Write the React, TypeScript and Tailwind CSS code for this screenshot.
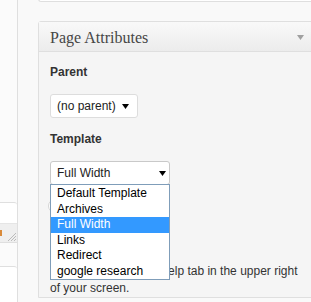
const TEMPLATES = ['Default Template', 'Archives', 'Full Width', 'Links', 'Redirect', 'google research'];

function Caret({ className }: { className?: string }) {
  return (
    <svg width="7" height="5" viewBox="0 0 7 5" className={className}>
      <path d="M0 0h7L3.5 5z" fill="currentColor" />
    </svg>
  );
}

export default function App() {
  return (
    <div className="flex h-[302px] w-[311px] overflow-hidden bg-[#f9f9f9] font-['Liberation_Sans',Arial,sans-serif] text-[12px] text-[#333]">
      {/* left column, cut off */}
      <aside className="flex w-[18px] shrink-0 flex-col border-r border-[#dfdfdf] bg-[#fbfbfb]">
        <div className="h-[228px]" />
        <div className="h-[41px] rounded-tr-[3px] border-y border-[#dfdfdf] bg-white">
          <div className="h-[20px]" />
          <div className="relative flex h-[19px] items-center border-t border-[#e5e5e5] bg-[#efefef]">
            <span className="h-[6px] w-[2px] bg-[#d98a3a]" />
            <svg width="9" height="9" viewBox="0 0 9 9" className="absolute right-[1px] bottom-[1px]">
              <path d="M9 1L1 9M9 4L4 9M9 7L7 9" stroke="#bbb" strokeWidth="1" />
            </svg>
          </div>
        </div>
        <div className="mt-[23px] h-[40px] rounded-tr-[3px] border-t border-[#dfdfdf] bg-white" />
      </aside>

      <main className="w-[300px] shrink-0 pl-[20px]">
        <div className="-mt-px h-[3px] rounded-bl-[3px] border-b border-l border-[#dfdfdf] bg-white" />

        <section className="mt-[19px] rounded-t-[3px] border border-[#dfdfdf] bg-[#f5f5f5]">
          <header className="flex h-[30px] items-center justify-between border-b border-[#dfdfdf] bg-gradient-to-b from-[#f9f9f9] to-[#ececec] pl-[11px] pr-[13px]">
            <h3 className="mt-[3px] font-['Liberation_Serif',Georgia,serif] text-[16px] text-[#464646]">Page Attributes</h3>
            <Caret className="mt-[2px] text-[#a0a0a0]" />
          </header>

          <div className="px-[11px] pt-[12px]">
            <p className="text-[12px] leading-[16px] font-bold">Parent</p>
            <div className="mt-[14px] flex h-[24px] w-[88px] items-center justify-between rounded-[3px] border border-[#dddddd] bg-white pr-[8px] pl-[6px] text-[#222]">
              <span>(no parent)</span>
              <Caret className="text-black" />
            </div>

            <p className="mt-[13px] text-[12px] leading-[16px] font-bold">Template</p>
            <div className="relative mt-[14px]">
              <div className="flex h-[24px] w-[120px] items-center justify-between rounded-[3px] border border-[#c9c9c9] bg-white pr-[3px] pl-[6px] text-[#222]">
                <span>Full Width</span>
                <Caret className="text-black" />
              </div>

              <div className="mt-[14px] ml-[-2px] h-[14px] w-[14px] rounded-full border border-[#d5d5d5] bg-white" />

              <p className="mt-[50px] w-[258px] leading-[17px] text-[#333]">
                Need help? Use the Help tab in the upper right of your screen.
              </p>

              {/* open dropdown */}
              <ul className="absolute top-[23px] left-0 w-[120px] border border-[#7f9db9] bg-white pt-[1px] text-black">
                {TEMPLATES.map((t) => (
                  <li
                    key={t}
                    className={t === 'Full Width' ? 'h-[15.5px] bg-[#3399ff] pl-[6px] leading-[15.5px] text-white' : 'h-[15.5px] pl-[6px] leading-[15.5px]'}
                  >
                    {t}
                  </li>
                ))}
              </ul>
            </div>
          </div>
        </section>
      </main>
    </div>
  );
}
